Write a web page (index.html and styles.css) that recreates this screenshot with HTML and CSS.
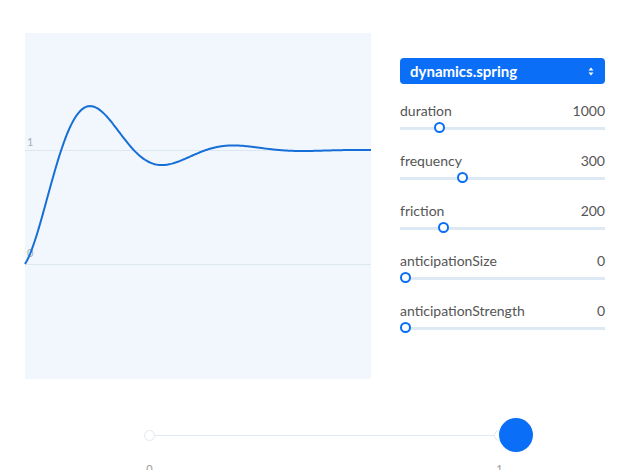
FILE: index.html
```
<!DOCTYPE html>
<html>
<head>
<meta charset="utf-8">
<link rel="stylesheet" href="styles.css">
</head>
<body>
<div class="main">
  <div class="chart">
    <svg class="plot" width="346" height="346" viewBox="0 0 346 346">
      <line class="grid" x1="0" y1="117.5" x2="346" y2="117.5"/>
      <line class="grid" x1="0" y1="231.5" x2="346" y2="231.5"/>
      <text class="axis" x="2" y="113">1</text>
      <text class="axis" x="2" y="224">0</text>
      <path id="curve" class="curve" d=""/>
    </svg>
  </div>
  <div class="panel">
    <div class="select">
      <span>dynamics.spring</span>
      <svg class="arrows" width="6" height="9" viewBox="0 0 6 9"><path d="M3 0.5 L5.5 3.5 L0.5 3.5 Z M3 8.5 L5.5 5.5 L0.5 5.5 Z" fill="#fff"/></svg>
    </div>
    <div class="row">
      <div class="label"><span>duration</span><span>1000</span></div>
      <div class="track"><div class="thumb" style="left:34px"></div></div>
    </div>
    <div class="row">
      <div class="label"><span>frequency</span><span>300</span></div>
      <div class="track"><div class="thumb" style="left:57px"></div></div>
    </div>
    <div class="row">
      <div class="label"><span>friction</span><span>200</span></div>
      <div class="track"><div class="thumb" style="left:38px"></div></div>
    </div>
    <div class="row">
      <div class="label"><span>anticipationSize</span><span>0</span></div>
      <div class="track"><div class="thumb" style="left:0px"></div></div>
    </div>
    <div class="row">
      <div class="label"><span>anticipationStrength</span><span>0</span></div>
      <div class="track"><div class="thumb" style="left:0px"></div></div>
    </div>
  </div>
</div>
<div class="scrub">
  <div class="end"></div>
  <div class="line"></div>
  <div class="end"></div>
  <div class="dot"></div>
</div>
<div class="scale"><span>0</span><span>1</span></div>
<script src="script.js"></script>
</body>
</html>
```
FILE: styles.css
```
html, body {
  margin: 0;
  padding: 0;
  background: #fff;
  font-family: "Lato", "Open Sans", sans-serif;
  color: #555;
  overflow: hidden;
}
.main {
  display: flex;
  padding: 33px 0 0 25px;
  gap: 29px;
}
.chart {
  width: 346px;
  height: 346px;
  background: #f2f7fd;
}
.plot {
  display: block;
  overflow: visible;
}
.grid {
  stroke: #dde7f0;
  stroke-width: 1;
}
.axis {
  font-family: "Lato", sans-serif;
  font-size: 11px;
  fill: #a9adb2;
}
.curve {
  fill: none;
  stroke: #156fd6;
  stroke-width: 2;
}
.panel {
  width: 205px;
  padding-top: 25px;
}
.select {
  height: 26px;
  background: #0a6ef6;
  border-radius: 4px;
  display: flex;
  align-items: center;
  justify-content: space-between;
  padding: 0 11px 0 10px;
  color: #fff;
  font-size: 15px;
  font-weight: 700;
  margin-bottom: 17px;
}
.arrows {
  display: block;
}
.row {
  margin-bottom: 16px;
}
.label {
  display: flex;
  justify-content: space-between;
  height: 20px;
  line-height: 20px;
  font-size: 14px;
  color: #555;
}
.track {
  position: relative;
  height: 14px;
}
.track::before {
  content: "";
  position: absolute;
  left: 0;
  right: 0;
  top: 6px;
  height: 3px;
  background: #dde9f5;
}
.thumb {
  position: absolute;
  top: 1px;
  width: 7px;
  height: 7px;
  border: 2px solid #0a6ef6;
  border-radius: 50%;
  background: #fff;
}
.scrub {
  position: relative;
  display: flex;
  align-items: center;
  margin: 39px 0 0 144px;
  width: 361px;
  height: 35px;
}
.end {
  width: 9px;
  height: 9px;
  border: 1px solid #dfe9f3;
  border-radius: 50%;
  background: #fff;
  flex: none;
}
.line {
  flex: 1;
  height: 1px;
  background: #e0eaf4;
}
.dot {
  position: absolute;
  left: 355px;
  top: 0;
  width: 34px;
  height: 34px;
  border-radius: 50%;
  background: #0a6ef6;
}
.scale {
  display: flex;
  justify-content: space-between;
  margin: 9px 0 0 144px;
  width: 361px;
  font-size: 11px;
  line-height: 14px;
  color: #999;
}
.scale span {
  width: 11px;
  text-align: center;
}
```
FILE: script.js
```
(function () {
  var pts = [];
  var N = 346;
  for (var i = 0; i <= N; i++) {
    var t = i / N;
    var f = 1 - Math.pow(40, -t) * (1 - t) * Math.cos(15 * t);
    var x = i;
    var y = 231 - f * 114;
    pts.push((i === 0 ? "M" : "L") + x.toFixed(2) + " " + y.toFixed(2));
  }
  document.getElementById("curve").setAttribute("d", pts.join(" "));
})();
```
